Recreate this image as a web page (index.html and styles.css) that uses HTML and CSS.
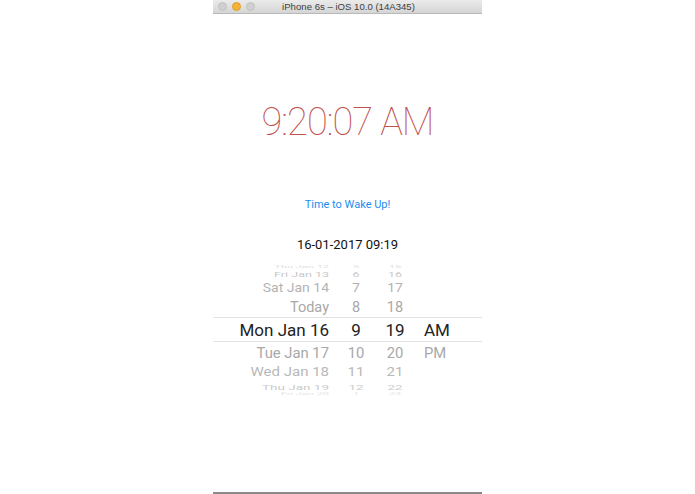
FILE: index.html
```html
<!DOCTYPE html>
<html>
<head>
<meta charset="utf-8">
<link rel="stylesheet" href="styles.css">
</head>
<body>
<div class="window">
  <div class="titlebar">
    <div class="lights">
      <span class="light grey"></span>
      <span class="light orange"></span>
      <span class="light grey"></span>
    </div>
    <div class="title">iPhone 6s – iOS 10.0 (14A345)</div>
  </div>
  <div class="screen">
    <div class="clock">9:20:07 AM</div>
    <div class="wake">Time to Wake Up!</div>
    <div class="date">16-01-2017 09:19</div>
    <div class="picker">
      <div class="row r0"><span class="c1">Thu Jan 12</span><span class="c2">5</span><span class="c3">15</span><span class="c4"></span></div>
      <div class="row r1"><span class="c1">Fri Jan 13</span><span class="c2">6</span><span class="c3">16</span><span class="c4"></span></div>
      <div class="row r2"><span class="c1">Sat Jan 14</span><span class="c2">7</span><span class="c3">17</span><span class="c4"></span></div>
      <div class="row r3"><span class="c1">Today</span><span class="c2">8</span><span class="c3">18</span><span class="c4"></span></div>
      <div class="row sel"><span class="c1">Mon Jan 16</span><span class="c2">9</span><span class="c3">19</span><span class="c4">AM</span></div>
      <div class="row r5"><span class="c1">Tue Jan 17</span><span class="c2">10</span><span class="c3">20</span><span class="c4">PM</span></div>
      <div class="row r6"><span class="c1">Wed Jan 18</span><span class="c2">11</span><span class="c3">21</span><span class="c4"></span></div>
      <div class="row r7"><span class="c1">Thu Jan 19</span><span class="c2">12</span><span class="c3">22</span><span class="c4"></span></div>
      <div class="row r8"><span class="c1">Fri Jan 20</span><span class="c2">1</span><span class="c3">23</span><span class="c4"></span></div>
    </div>
  </div>
</div>
</body>
</html>
```
FILE: styles.css
```css
html, body {
  margin: 0;
  padding: 0;
  background: #ffffff;
}
body {
  width: 695px;
  height: 494px;
  overflow: hidden;
  font-family: Roboto, "Liberation Sans", sans-serif;
}
.window {
  width: 269px;
  height: 492px;
  margin-left: 213px;
  display: flex;
  flex-direction: column;
  border-bottom: 2px solid #8a8a8a;
  background: #fff;
}
.titlebar {
  height: 13px;
  background: linear-gradient(#ebebeb, #d5d5d5);
  border-bottom: 1px solid #b9b9b9;
  position: relative;
  display: flex;
  align-items: center;
  justify-content: center;
}
.lights {
  position: absolute;
  left: 5px;
  top: 2px;
  display: flex;
  gap: 5px;
}
.light {
  width: 9px;
  height: 9px;
  border-radius: 50%;
  box-sizing: border-box;
}
.light.grey {
  background: #d0d0d0;
  border: 1px solid #c2c2c2;
}
.light.orange {
  background: #f6b238;
  border: 1px solid #e09e2a;
}
.title {
  font-family: "Liberation Sans", sans-serif;
  font-size: 9.6px;
  color: #404040;
  line-height: 13px;
  padding-left: 2px;
}
.screen {
  display: flex;
  flex-direction: column;
  align-items: center;
}
.clock {
  margin-top: 85px;
  height: 46px;
  line-height: 46px;
  font-size: 38px;
  font-weight: 100;
  letter-spacing: -1px;
  color: #c0504c;
}
.wake {
  margin-top: 52px;
  height: 16px;
  line-height: 16px;
  font-size: 11px;
  color: #1a8ef0;
}
.date {
  margin-top: 23px;
  height: 18px;
  line-height: 18px;
  font-size: 13px;
  color: #111;
}
.picker {
  margin-top: 7px;
  width: 269px;
  display: flex;
  flex-direction: column;
}
.row {
  display: grid;
  grid-template-columns: 116px 54px 24px 1fr;
  align-items: center;
  white-space: nowrap;
  color: #a9a9a9;
}
.row span {
  display: block;
}
.c1 { text-align: right; }
.c2, .c3 { text-align: center; }
.c4 { padding-left: 17px; }
.r0 { height: 6px; font-size: 11px; color: #dedede; }
.r0 span { transform: scaleY(0.3); line-height: 1; }
.r1 { height: 11px; font-size: 12.5px; color: #c8c8c8; }
.r1 span { transform: scaleY(0.62); }
.r2 { height: 20px; font-size: 14px; color: #b3b3b3; }
.r2 span { transform: scaleY(0.88); }
.r3 { height: 19px; font-size: 14.5px; color: #a8a8a8; }
.sel {
  height: 23px;
  font-size: 17px;
  color: #222;
  border-top: 1px solid #e3e3e3;
  border-bottom: 1px solid #e3e3e3;
}
.r5 { height: 21px; font-size: 14.8px; color: #a8a8a8; }
.r6 { height: 18px; font-size: 15px; color: #b8b8b8; }
.r6 span { transform: scaleY(0.82); }
.r7 { height: 8px; font-size: 13.5px; color: #cbcbcb; }
.r7 span { transform: scaleY(0.6); line-height: 1; }
.r8 { height: 6px; font-size: 11px; color: #e4e4e4; }
.r8 span { transform: scaleY(0.25); line-height: 1; }
```
